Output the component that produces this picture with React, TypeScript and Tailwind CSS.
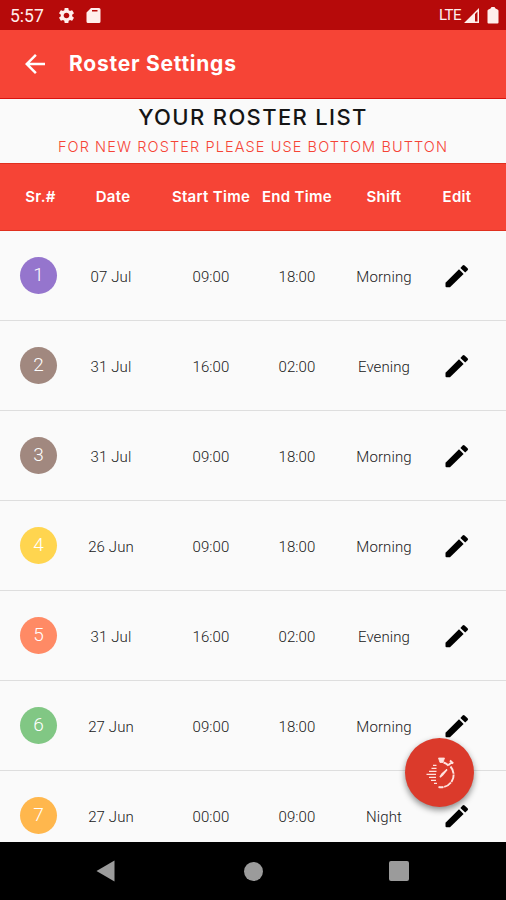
import { MdArrowBack, MdSettings } from "react-icons/md";

const columns = "grid grid-cols-[37px_108px_92px_80px_94px_50px] items-center justify-items-center pl-5";

const roster = [
  { id: 1, date: "07 Jul", start: "09:00", end: "18:00", shift: "Morning", color: "bg-[#9575cd]" },
  { id: 2, date: "31 Jul", start: "16:00", end: "02:00", shift: "Evening", color: "bg-[#a1887f]" },
  { id: 3, date: "31 Jul", start: "09:00", end: "18:00", shift: "Morning", color: "bg-[#a1887f]" },
  { id: 4, date: "26 Jun", start: "09:00", end: "18:00", shift: "Morning", color: "bg-[#ffd54f]" },
  { id: 5, date: "31 Jul", start: "16:00", end: "02:00", shift: "Evening", color: "bg-[#ff8a65]" },
  { id: 6, date: "27 Jun", start: "09:00", end: "18:00", shift: "Morning", color: "bg-[#81c784]" },
  { id: 7, date: "27 Jun", start: "00:00", end: "09:00", shift: "Night", color: "bg-[#ffb74d]" },
];

function StatusBar() {
  return (
    <div className="flex h-[30px] items-center bg-[#b60a0a] pl-[10px] text-[#ffeeec]">
      <span className="w-[47px] pt-[2px] text-[17.5px] whitespace-nowrap">5:57</span>
      <MdSettings size={19} />
      <svg className="ml-[10px]" width="15" height="17" viewBox="0 0 15 17" fill="currentColor">
        <path fillRule="evenodd" d="M5 1h8a1.500 1.500 0 0 1 1.500 1.500v12A1.500 1.500 0 0 1 13 16H2a1.500 1.500 0 0 1-1.500-1.500V5.500zM6 3v1.500h5.500V3z" />
      </svg>
      <span className="ml-auto pt-px text-[15px] tracking-[-0.5px]">LTE</span>
      <svg className="ml-[2px]" width="17" height="17" viewBox="0 0 17 17" fill="currentColor">
        <path fillRule="evenodd" d="M16 1v15H1zM12 7v7.500h2.500V4.500z" />
      </svg>
      <svg className="mr-[7px] ml-[7px]" width="12" height="17" viewBox="0 0 12 17" fill="currentColor">
        <path d="M4.500 0h3l1 1.500 2 1a1.500 1.500 0 0 1 1 1.500v11.500a1 1 0 0 1-1 1h-9a1 1 0 0 1-1-1V4a1.500 1.500 0 0 1 1-1.500l2-1z" />
      </svg>
    </div>
  );
}

function PencilIcon() {
  return (
    <svg className="ml-[2px]" width="24" height="24" viewBox="0 0 24 24" fill="#000">
      <path d="M.5 22.300V18.800L14 5.300l4.600 4.600L5 23.300H1.500q-1 0-1-1z" />
      <path d="M15.400 3.900l2.200-2.400q1-1 2 0l3 2.700q1 1 0 2l-2.400 2.200z" />
    </svg>
  );
}

function StopwatchIcon() {
  return (
    <svg width="30" height="34" viewBox="0 0 30 34" fill="none" stroke="#ffe3df" strokeWidth="1.600">
      <path d="M13.500 2h6l-1.500 4.500h-3z" fill="#ffe3df" strokeWidth=".8" />
      <path d="M18.500 6.500q2.800.7 5 3M23.500 9l3-2.500M25 4.500l3.200 3" strokeWidth="1.900" />
      <path d="M25.500 10.500A12.500 12.500 0 0 1 13.500 31" strokeWidth="1.900" strokeDasharray="8 .7" />
      <path d="M15 21.200l2-3.200 5-4.500-4.500 5.500z" fill="#ffe3df" />
      <path d="M8 9.300h3.500M6.500 12.300h5M4 15.300h7.500M1.500 18.300h9.500M4 21.300h7M6 24.300h5M9 27.300h3" strokeWidth="1.300" />
    </svg>
  );
}

export default function App() {
  return (
    <div className="relative flex h-[900px] w-[506px] flex-col overflow-hidden bg-[#fafafa] font-['Roboto',sans-serif]">
      <StatusBar />

      <header className="flex h-[69px] items-center border-b border-[#d9130f] bg-[#f64436] pl-5 text-white">
        <MdArrowBack size={30} />
        <h1 className="ml-[19px] font-['Inter',sans-serif] text-[21px] font-bold tracking-[0.75px]">Roster Settings</h1>
      </header>

      <section className="flex h-16 flex-col items-center whitespace-nowrap font-['Inter',sans-serif]">
        <h2 className="mt-[4px] text-[22px] leading-7 font-medium tracking-[1.35px] text-[#151515]">YOUR ROSTER LIST</h2>
        <p className="mt-[6px] text-[14.5px] leading-5 font-light tracking-[1.1px] text-[#f64436]">
          FOR NEW ROSTER PLEASE USE BOTTOM BUTTON
        </p>
      </section>

      <div className={`${columns} h-[68px] border-y border-[#e0301f] bg-[#f64436] font-['Inter',sans-serif] text-[15px] font-semibold tracking-[0.3px] whitespace-nowrap text-white`}>
        <span className="pl-1">Sr.#</span>
        <span className="pl-1">Date</span>
        <span>Start Time</span>
        <span>End Time</span>
        <span>Shift</span>
        <span className="pl-[2px]">Edit</span>
      </div>

      <main className="h-[611px] overflow-hidden">
        {roster.map((row) => (
          <div key={row.id} className={`${columns} h-[90px] border-b border-[#dedede] text-[15px] font-light tracking-[0.1px] text-[#202020]`}>
            <div className={`flex size-[37px] items-center justify-center rounded-full text-[19px] text-white ${row.color}`}>
              {row.id}
            </div>
            <span className="pt-[3px]">{row.date}</span>
            <span className="pt-[3px]">{row.start}</span>
            <span className="pt-[3px]">{row.end}</span>
            <span className="pt-[3px]">{row.shift}</span>
            <PencilIcon />
          </div>
        ))}
      </main>

      <nav className="flex h-[58px] items-center bg-black">
        <svg className="ml-[96px]" width="19" height="22" viewBox="0 0 19 22">
          <path d="M18.500.5v21L.5 11z" fill="#9b9b9b" />
        </svg>
        <div className="ml-[129px] size-[19px] rounded-full bg-[#9b9b9b]" />
        <div className="ml-[126px] size-[20px] rounded-[2px] bg-[#9b9b9b]" />
      </nav>

      <button className="absolute top-[738px] left-[405px] flex size-[69px] items-center justify-center rounded-full bg-[#db3a2b] shadow-[0_3px_6px_rgba(0,0,0,0.45)]">
        <StopwatchIcon />
      </button>
    </div>
  );
}
